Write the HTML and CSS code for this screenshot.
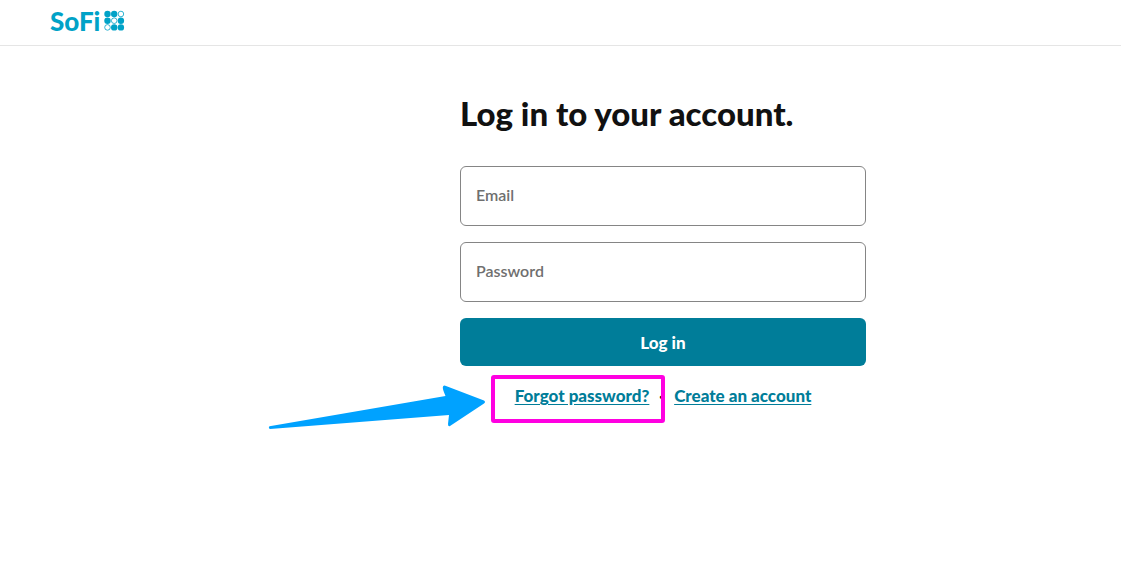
FILE: index.html
```html
<!DOCTYPE html>
<html lang="en">
<head>
    <meta charset="UTF-8">
    <meta name="viewport" content="width=device-width, initial-scale=1.0">
    <title>Log in | SoFi</title>
    <link rel="stylesheet" href="styles.css">
</head>
<body>

    <header class="header">
        <a class="logo" href="#">
            <span>SoFi</span>
            <svg class="logo-dots" width="21" height="21" viewBox="0 0 21 21" aria-hidden="true">
                <g fill="#00a2c7">
                    <circle cx="3.5" cy="4" r="3.2"/>
                    <circle cx="10.2" cy="4" r="3.2"/>
                    <circle cx="3.5" cy="10.7" r="3.2"/>
                    <circle cx="16.9" cy="10.7" r="3.2"/>
                    <circle cx="10.2" cy="17.4" r="3.2"/>
                    <circle cx="16.9" cy="17.4" r="3.2"/>
                </g>
                <g fill="none" stroke="#00a2c7" stroke-width="0.8">
                    <circle cx="16.9" cy="4" r="2.8"/>
                    <circle cx="10.2" cy="10.7" r="2.8"/>
                    <circle cx="3.5" cy="17.4" r="2.8"/>
                </g>
            </svg>
        </a>
    </header>

    <main class="main">
        <form class="login">
            <h1>Log in to your account.</h1>
            <input class="field" type="email" placeholder="Email" aria-label="Email">
            <input class="field" type="password" placeholder="Password" aria-label="Password">
            <button class="submit" type="button">Log in</button>
            <div class="links">
                <a href="#">Forgot password?</a>
                <span class="dot">·</span>
                <a href="#">Create an account</a>

                <!-- callout on the forgot password link -->
                <div class="highlight"></div>
                <svg class="arrow" width="218" height="46" viewBox="0 0 218 46" aria-hidden="true">
                    <path d="M1.5 42.3 L177.5 12 Q174 4 175 2.5 Q176 1 178 2 L216 16.5 Q218 18 216 19.5 L182 42 Q180 43 180 40 L181 31 L2 45 Q0 44 1.5 42.3 Z" fill="#00a2ff"/>
                </svg>
            </div>
        </form>
    </main>

</body>
</html>
```
FILE: styles.css
```css
* {
    box-sizing: border-box;
}

body {
    min-height: 100vh;
    margin: 0;
    font-family: Lato, "Liberation Sans", sans-serif;
    font-size: 17px;
    color: #111;
    background-color: #fff;
}

.header {
    display: flex;
    align-items: center;
    height: 46px;
    padding: 0 50px 4px;
    border-bottom: 1px solid #e5e5e5;
}

.logo {
    display: flex;
    align-items: center;
    gap: 4px;
    color: #00a2c7;
    font-size: 26px;
    font-weight: 900;
    line-height: 32px;
    text-decoration: none;
}

.main {
    display: flex;
    justify-content: center;
    padding: 48px 0 48px 205px;
}

.login {
    display: flex;
    flex-direction: column;
    gap: 16px;
    width: 406px;
}

h1 {
    margin: 0 0 18px;
    font-size: 33px;
    font-weight: 900;
    line-height: 38px;
    white-space: nowrap;
}

.field {
    width: 100%;
    height: 60px;
    padding: 0 15px 4px;
    border: 1px solid #858585;
    border-radius: 6px;
    font: inherit;
    font-size: 16px;
    font-weight: 600;
    background-color: #fff;
}

.field::placeholder {
    color: #6f6f6f;
    opacity: 1;
}

.submit {
    height: 48px;
    border: none;
    border-radius: 6px;
    background-color: #007d99;
    color: #fff;
    font: inherit;
    font-weight: 900;
    cursor: pointer;
}

.links {
    position: relative;
    display: flex;
    justify-content: center;
    gap: 10px;
    margin-top: 2px;
    line-height: 24px;
    font-weight: 900;
}

.links a {
    color: #007d99;
    text-underline-offset: 2px;
}

.highlight {
    position: absolute;
    top: -9px;
    left: 31px;
    width: 174px;
    height: 48px;
    border: 4px solid #ff00e1;
    border-radius: 3px;
}

.arrow {
    position: absolute;
    top: 0;
    left: -192px;
}
```
